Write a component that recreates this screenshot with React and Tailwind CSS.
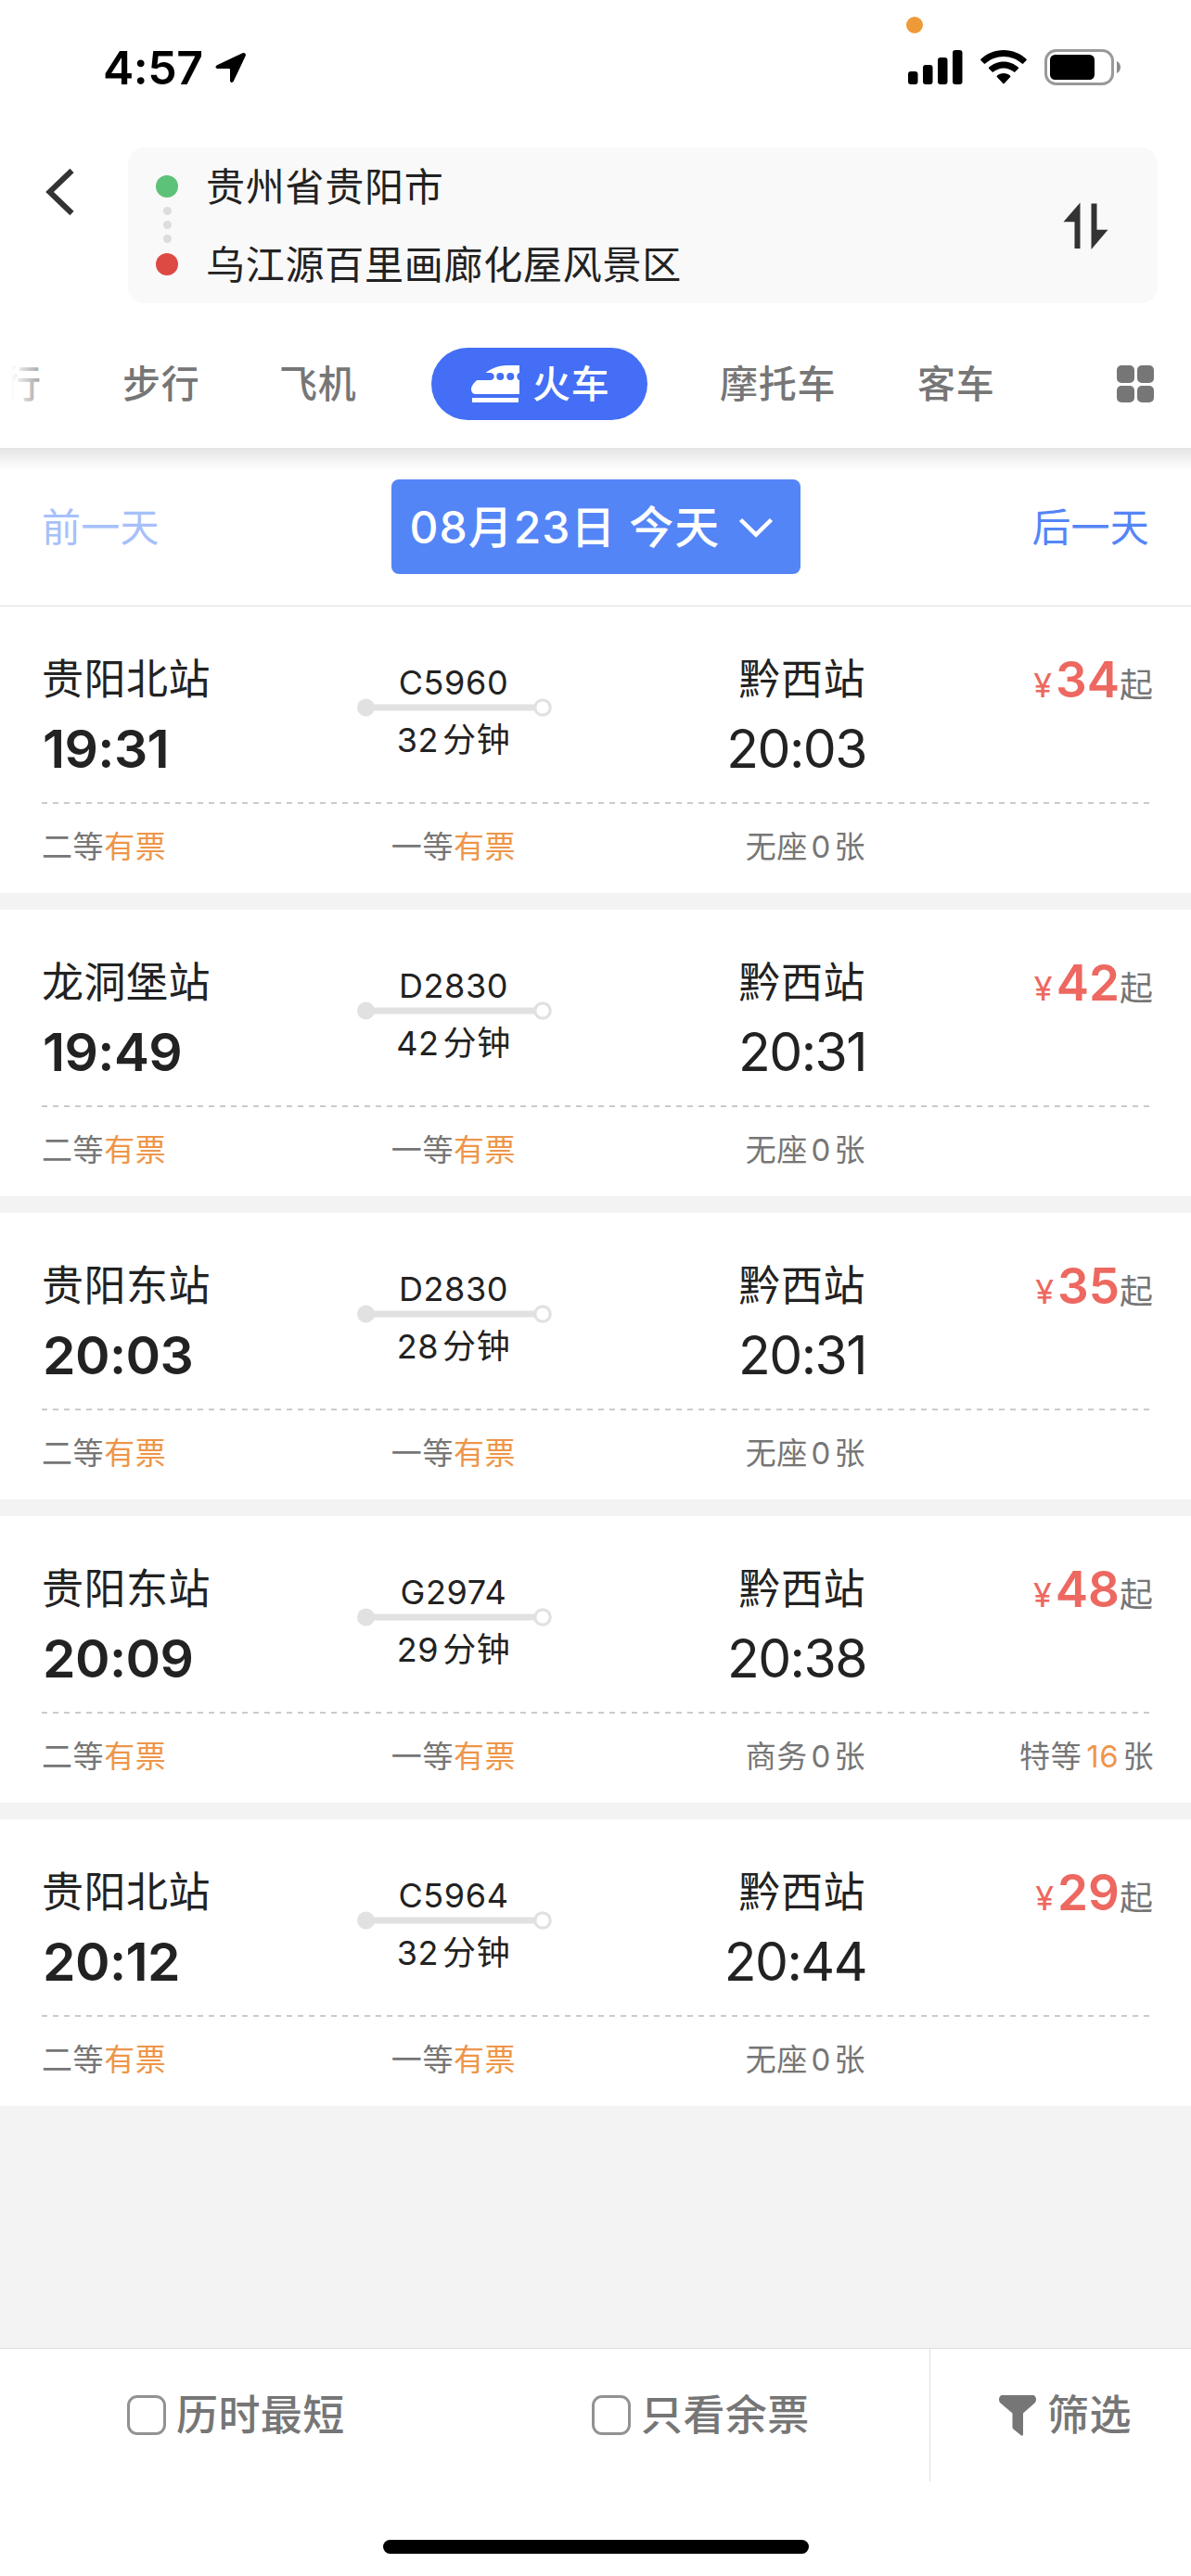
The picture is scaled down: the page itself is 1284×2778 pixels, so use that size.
import React from "react";

const trains = [
  {
    from: "贵阳北站",
    depart: "19:31",
    no: "C5960",
    duration: "32",
    to: "黔西站",
    arrive: "20:03",
    price: "34",
    seats: [
      { name: "二等", has: true },
      { name: "一等", has: true },
      { name: "无座", count: 0 },
    ],
  },
  {
    from: "龙洞堡站",
    depart: "19:49",
    no: "D2830",
    duration: "42",
    to: "黔西站",
    arrive: "20:31",
    price: "42",
    seats: [
      { name: "二等", has: true },
      { name: "一等", has: true },
      { name: "无座", count: 0 },
    ],
  },
  {
    from: "贵阳东站",
    depart: "20:03",
    no: "D2830",
    duration: "28",
    to: "黔西站",
    arrive: "20:31",
    price: "35",
    seats: [
      { name: "二等", has: true },
      { name: "一等", has: true },
      { name: "无座", count: 0 },
    ],
  },
  {
    from: "贵阳东站",
    depart: "20:09",
    no: "G2974",
    duration: "29",
    to: "黔西站",
    arrive: "20:38",
    price: "48",
    seats: [
      { name: "二等", has: true },
      { name: "一等", has: true },
      { name: "商务", count: 0 },
      { name: "特等", count: 16 },
    ],
  },
  {
    from: "贵阳北站",
    depart: "20:12",
    no: "C5964",
    duration: "32",
    to: "黔西站",
    arrive: "20:44",
    price: "29",
    seats: [
      { name: "二等", has: true },
      { name: "一等", has: true },
      { name: "无座", count: 0 },
    ],
  },
];

const StatusBar = () => (
  <div className="relative h-[159px] shrink-0 flex items-start justify-between pl-[111px] pr-[75px] pt-[43px] text-black">
    <div className="flex items-center h-[60px]">
      <span className="text-[50px] leading-[60px] font-semibold tracking-[-0.5px] w-[121px] whitespace-nowrap">
        4:57
      </span>
      <svg className="w-[34px] h-[34px]" viewBox="0 0 34 34">
        <path
          d="M29.5 1.2 2 14.2C-.3 15.4.2 18 2.6 18H15a1 1 0 0 1 1 1v11.8c0 2.6 2.8 3 3.8.8L32.7 4.3C33.6 2 31.7.2 29.5 1.2Z"
          fill="currentColor"
        />
      </svg>
    </div>
    <div className="flex items-start pt-[10px]">
      <svg className="w-[59px] h-[38px] mr-[19px]" viewBox="0 0 59 38" fill="currentColor">
        <rect x="0" y="24" width="10.5" height="14" rx="3" />
        <rect x="16" y="17" width="10.5" height="21" rx="3" />
        <rect x="32" y="9" width="10.5" height="29" rx="3" />
        <rect x="48" y="1" width="10.5" height="37" rx="3" />
      </svg>
      <svg className="w-[50px] h-[38px] mr-[19px]" viewBox="0 0 50 38" fill="currentColor">
        <path d="M25 1C15.5 1 6.5 4.8.4 10.8c-.4.4-.4.9 0 1.3l3.4 3.5c.4.4 1 .4 1.4 0C10.5 10.8 17.5 8 25 8s14.5 2.8 19.8 7.6c.4.4 1 .4 1.4 0l3.4-3.5c.4-.4.4-.9 0-1.3C43.5 4.8 34.5 1 25 1Z" />
        <path d="M25 13.5c-6.1 0-11.7 2.4-15.9 6.2-.4.4-.4.9 0 1.3l3.5 3.6c.4.4.9.4 1.3 0 3-2.6 6.9-4.2 11.1-4.2s8.1 1.6 11.1 4.2c.4.4.9.4 1.3 0l3.5-3.6c.4-.4.4-.9 0-1.3-4.2-3.8-9.8-6.2-15.9-6.2Z" />
        <path d="M25 26c-2.8 0-5.3 1-7.2 2.7-.4.4-.4.9 0 1.3l6.5 6.9c.4.4 1 .4 1.4 0l6.5-6.9c.4-.4.4-.9 0-1.3C30.3 27 27.8 26 25 26Z" />
      </svg>
      <svg className="w-[83px] h-[39px]" viewBox="0 0 83 39">
        <rect x="1.5" y="1.5" width="72" height="36" rx="11" fill="none" stroke="#999" strokeWidth="3" />
        <rect x="6" y="6" width="48" height="27" rx="5.5" fill="currentColor" />
        <path d="M78 13c2.5 1 4 3.6 4 6.5s-1.5 5.5-4 6.5Z" fill="#8c8c8c" />
      </svg>
    </div>
    {/* mic in use */}
    <span className="absolute left-[977px] top-[18px] w-[18px] h-[18px] rounded-full bg-[#ef9a38]" />
  </div>
);

const RouteBox = () => (
  <div className="flex h-[168px] shrink-0">
    <div className="w-[138px] pl-[49px] pt-[22px]">
      <svg className="w-[32px] h-[52px]" viewBox="0 0 32 52">
        <path d="M28.5 3 4.5 26l24 23" fill="none" stroke="#333" strokeWidth="6" />
      </svg>
    </div>
    <div className="flex items-center w-[1110px] h-[168px] rounded-[18px] bg-[#f9f9f9] pl-[30px] pr-[53px]">
      <div className="flex flex-col items-center w-[24px]">
        <span className="w-6 h-6 rounded-full bg-[#5cc279]" />
        <div className="flex flex-col gap-[6px] mt-[10px] mb-[11px]">
          <span className="w-[9px] h-[9px] rounded-full bg-[#ddd]" />
          <span className="w-[9px] h-[9px] rounded-full bg-[#ddd]" />
          <span className="w-[9px] h-[9px] rounded-full bg-[#ddd]" />
        </div>
        <span className="w-6 h-6 rounded-full bg-[#dd4a43]" />
      </div>
      <div className="flex-1 pl-[30px] pt-[2px] text-[42px] leading-[84px] tracking-[0.75px] text-[#222]">
        <div>贵州省贵阳市</div>
        <div>乌江源百里画廊化屋风景区</div>
      </div>
      <svg className="w-[49px] h-[51px]" viewBox="0 0 49 51" fill="#333">
        <path d="M18.5.5V50h-6V21.3H.5Z" />
        <path d="M30.5 51V1.5h6v28.2h12Z" />
      </svg>
    </div>
  </div>
);

const TrainIcon = () => (
  <svg className="w-[52px] h-[41px]" viewBox="0 0 52 41" fill="white">
    <path
      fillRule="evenodd"
      d="M52 0v8c-3.500.500-3.500 7.500 0 8v15H5C1.500 31 0 28.500 0 25.500 0 22.500 3 19 6 16h15c5-.500 5-7.500 0-8h-5.500C21 4 29 0 38 0ZM31.300 8a4 4 0 1 0 0 8 4 4 0 0 0 0-8Zm11 0a4 4 0 1 0 0 8 4 4 0 0 0 0-8Z"
    />
    <rect x="1" y="35" width="50" height="5" />
  </svg>
);

const Tabs = () => (
  <div className="flex items-center h-[156px] shrink-0 pt-[19px] pb-[1px] text-[41px] leading-[78px] tracking-[0.75px] font-medium text-[#767676] whitespace-nowrap">
    <div className="relative w-[132px] h-[78px] pl-[3px]">
      行
      <span className="absolute inset-y-0 left-0 w-[60px] bg-gradient-to-r from-white from-20% to-white/0" />
    </div>
    <div className="w-[169px]">步行</div>
    <div className="w-[164px]">飞机</div>
    <div className="flex items-center w-[233px] h-[78px] rounded-full bg-[#446ef5] pl-[43px] text-white">
      <TrainIcon />
      <span className="ml-[14px]">火车</span>
    </div>
    <div className="w-[291px] pl-[78px]">摩托车</div>
    <div className="w-[215px]">客车</div>
    <div className="grid grid-cols-2 gap-[3px] w-[40px]">
      <span className="h-[18.5px] rounded-[5px] bg-[#767676]" />
      <span className="h-[18.5px] rounded-[5px] bg-[#767676]" />
      <span className="h-[18.5px] rounded-[5px] bg-[#767676]" />
      <span className="h-[18.5px] rounded-[5px] bg-[#767676]" />
    </div>
  </div>
);

const DateBar = () => (
  <div className="h-[171px] shrink-0 border-b border-[#dedede] bg-gradient-to-b from-[#e4e4e4] to-white to-[24px]">
    <div className="flex items-center justify-between h-[170px] px-[45px] text-[42px] tracking-[0.2px] text-[#5485f7]">
      <span className="text-[#a7c0fb] w-[200px]">前一天</span>
      <button className="flex items-center w-[441px] h-[102px] rounded-[8px] bg-[#5485f7] pl-[20px] pt-[2px] text-white text-[48px] font-medium tracking-[1px] whitespace-nowrap">
        08月23日 今天
        <svg className="w-[38px] h-[22px] ml-[20px]" viewBox="0 0 38 22">
          <path d="M2.5 2.5 19 18.5l16.5-16" fill="none" stroke="white" strokeWidth="4.5" />
        </svg>
      </button>
      <span className="w-[200px] text-right">后一天</span>
    </div>
  </div>
);

const Seat = ({ seat }) => (
  <span>
    {seat.name}
    {seat.has ? (
      <span className="text-[#ee954a]">有票</span>
    ) : (
      <>
        <span className={seat.count > 0 ? "text-[#ee954a] ml-[5px] mr-[4px]" : "mx-[3.5px]"}>
          {seat.count}
        </span>
        张
      </>
    )}
  </span>
);

const TrainCard = ({ train }) => (
  <div className="h-[309px] shrink-0 bg-white px-[45px] pt-[44px] text-[#222] whitespace-nowrap">
    <div className="flex h-[167px]">
      <div className="w-[330px] pt-[2px]">
        <div className="text-[45px] leading-[66px] tracking-[0.5px]">{train.from}</div>
        <div className="text-[57px] leading-[84px] font-semibold tracking-[-0.6px] pl-[1px]">{train.depart}</div>
      </div>
      <div className="w-[228px] flex flex-col items-center pt-[13px] text-[36px]">
        <div className="leading-[50px] tracking-[0.6px]">{train.no}</div>
        <svg className="w-[210px] h-[20px] -my-[8px] ml-[2px]" viewBox="0 0 210 20">
          <rect x="10" y="6.5" width="182" height="7" fill="#e1e1e1" />
          <circle cx="9.5" cy="10" r="9.5" fill="#e1e1e1" />
          <circle cx="200" cy="10" r="8.2" fill="white" stroke="#e1e1e1" strokeWidth="3.2" />
        </svg>
        <div className="leading-[50px] tracking-[0.6px] mt-[8px]">
          {train.duration}
          <span className="ml-[4px]">分钟</span>
        </div>
      </div>
      <div className="w-[330px] pt-[2px] text-right">
        <div className="text-[45px] leading-[66px] tracking-[0.5px]">{train.to}</div>
        <div className="text-[57px] leading-[84px] tracking-[-1.5px] mr-[-1px]">{train.arrive}</div>
      </div>
      <div className="flex-1 flex items-baseline justify-end mr-[-4px] mt-[2px] h-[66px] leading-[66px] text-[#ed6860]">
        <span className="text-[36px] mr-[4px]">¥</span>
        <span className="text-[53px] font-semibold">{train.price}</span>
        <span className="text-[36px] text-[#767676]">起</span>
      </div>
    </div>
    <svg className="block w-[1195px] h-[2px]" viewBox="0 0 1195 2">
      <path d="M0 1h1195" stroke="#bbb" strokeWidth="1.5" strokeDasharray="6 6" />
    </svg>
    <div className="flex h-[93px] items-center text-[33px] tracking-[0.6px] text-[#767676]">
      <div className="w-[330px]">
        <Seat seat={train.seats[0]} />
      </div>
      <div className="w-[228px] text-center">
        <Seat seat={train.seats[1]} />
      </div>
      <div className="w-[330px] text-right">
        <Seat seat={train.seats[2]} />
      </div>
      <div className="flex-1 text-right mr-[-5px]">{train.seats[3] && <Seat seat={train.seats[3]} />}</div>
    </div>
  </div>
);

const CheckOption = ({ label }) => (
  <div className="flex items-center w-[501px] pl-[137px]">
    <span className="w-[42px] h-[43px] rounded-[11px] border-[3px] border-[#929292]" />
    <span className="ml-[11px]">{label}</span>
  </div>
);

const FilterBar = () => (
  <div className="h-[246px] shrink-0 bg-white border-t border-[#dedede]">
    <div className="flex h-[143px] text-[45px] tracking-[0.4px] font-medium text-[#767676] whitespace-nowrap">
      <CheckOption label="历时最短" />
      <CheckOption label="只看余票" />
      <div className="flex-1 flex items-center border-l border-[#dedede] pl-[74px]">
        <svg className="w-[40px] h-[44px]" viewBox="0 0 40 44">
          <path
            d="M3 0h34c3 1 4 5 2 8L26 19.5V42c0 1.500-1 2-2 1.500l-8-6.500c-1-.8-1.500-1.500-1.500-3V19.500L1 8C-1 5 0 1 3 0Z"
            fill="#767676"
          />
        </svg>
        <span className="ml-[12px]">筛选</span>
      </div>
    </div>
    <div className="mx-auto mt-[63px] w-[459px] h-[15px] rounded-full bg-black" />
  </div>
);

const App = () => {
  return (
    <div className="flex flex-col w-[1284px] h-[2778px] overflow-hidden bg-white font-[Inter,'Noto_Sans_CJK_SC',sans-serif]">
      <StatusBar />
      <RouteBox />
      <Tabs />
      <DateBar />
      <div className="flex-1 flex flex-col gap-[18px] bg-[#f3f3f3]">
        {trains.map((train, i) => (
          <TrainCard key={i} train={train} />
        ))}
      </div>
      <FilterBar />
    </div>
  );
};

export default App;
